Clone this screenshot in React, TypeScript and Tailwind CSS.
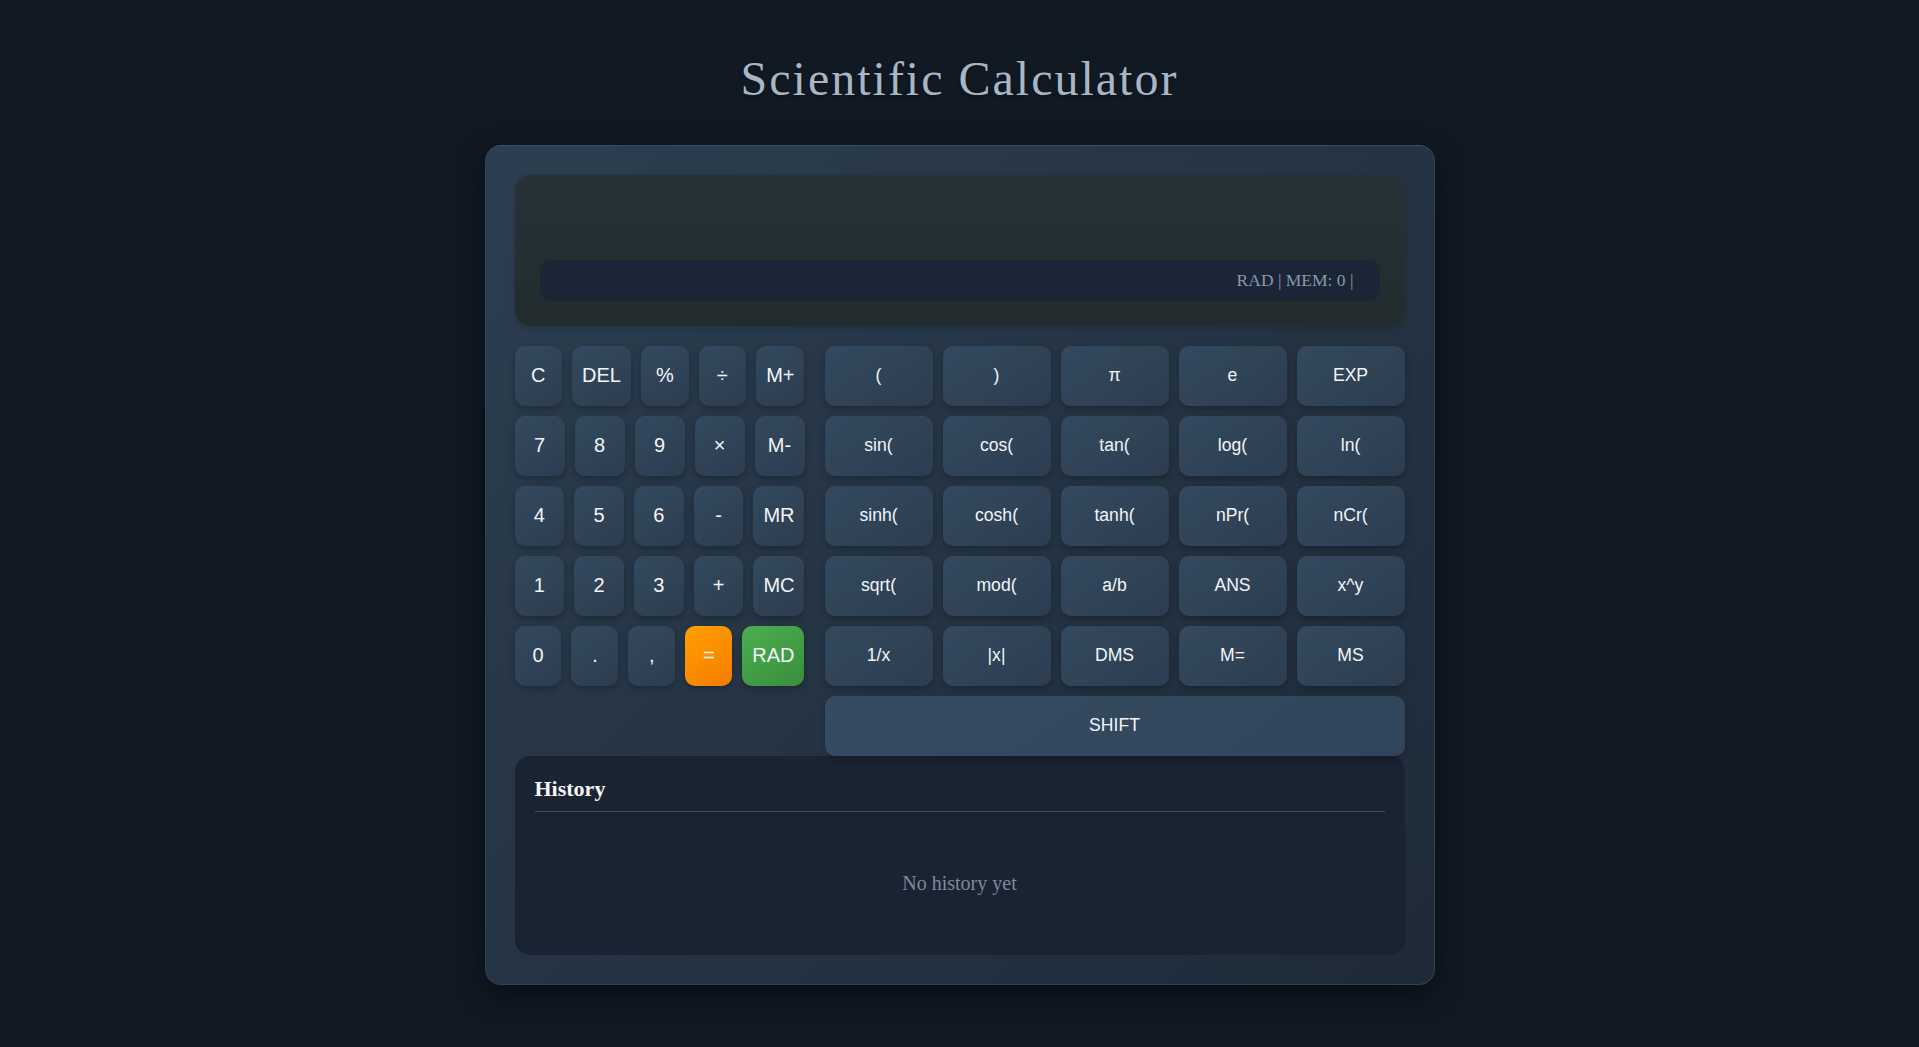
import React from "react";

const leftRows: string[][] = [
  ["C", "DEL", "%", "÷", "M+"],
  ["7", "8", "9", "×", "M-"],
  ["4", "5", "6", "-", "MR"],
  ["1", "2", "3", "+", "MC"],
  ["0", ".", ",", "=", "RAD"],
];

const rightKeys: string[] = [
  "(", ")", "π", "e", "EXP",
  "sin(", "cos(", "tan(", "log(", "ln(",
  "sinh(", "cosh(", "tanh(", "nPr(", "nCr(",
  "sqrt(", "mod(", "a/b", "ANS", "x^y",
  "1/x", "|x|", "DMS", "M=", "MS",
];

function leftClass(k: string): string {
  const base =
    "flex-1 h-[60px] px-[10px] pb-[2px] whitespace-nowrap rounded-[10px] text-[20px] text-[#f1f5f9] flex items-center justify-center shadow-[0_3px_6px_rgba(0,0,0,0.25)] font-['Liberation_Sans',Arial,sans-serif]";
  if (k === "=") return base + " bg-[linear-gradient(145deg,#ffa000,#f57c00)]";
  if (k === "RAD") return base + " bg-[linear-gradient(145deg,#4caf50,#388e3c)]";
  return base + " bg-[linear-gradient(145deg,#34495e,#2c3d50)]";
}

export default function App() {
  return (
    <div className="min-h-screen w-full bg-[#111923] pt-[51px] pb-[40px] font-['Liberation_Serif','Times_New_Roman',serif]">
      <h1 className="text-center text-[48px] leading-[55px] tracking-[2px] text-[#a8b6c4] mb-[39px] [text-shadow:0_2px_4px_rgba(0,0,0,0.3)]">
        Scientific Calculator
      </h1>

      <div className="mx-auto w-[950px] rounded-[16px] border border-[#2f4156] border-t-[#3a4e65] bg-[linear-gradient(135deg,#2c3e50,#1e2a38)] p-[29px] shadow-[0_10px_30px_rgba(0,0,0,0.5)]">
        {/* Display */}
        <div className="rounded-[15px] bg-[linear-gradient(180deg,#263236,#222c2f)] p-[25px] shadow-[0_2px_6px_rgba(0,0,0,0.15)]">
          <div className="h-[60px]" />
          <div className="flex h-[41px] items-center justify-end rounded-[10px] bg-[#1b2535] pr-[26px] text-[17.5px] text-[#8499ae]">
            RAD | MEM: 0 |
          </div>
        </div>

        {/* Keypad */}
        <div className="mt-[20px] grid grid-cols-[1fr_2fr] items-start gap-[20px]">
          <div className="flex flex-col gap-[10px]">
            {leftRows.map((row, i) => (
              <div key={i} className="flex gap-[10px]">
                {row.map((k) => (
                  <button key={k} className={leftClass(k)}>
                    {k}
                  </button>
                ))}
              </div>
            ))}
          </div>
          <div className="grid grid-cols-5 gap-[10px]">
            {rightKeys.map((k) => (
              <button
                key={k}
                className="flex h-[60px] items-center justify-center whitespace-nowrap rounded-[10px] pb-[2px] bg-[linear-gradient(145deg,#34495e,#2c3d50)] text-[17.6px] text-[#f1f5f9] shadow-[0_3px_6px_rgba(0,0,0,0.25)] font-['Liberation_Sans',Arial,sans-serif]"
              >
                {k}
              </button>
            ))}
            <button className="col-span-5 flex h-[60px] items-center justify-center rounded-[10px] pb-[2px] bg-[linear-gradient(145deg,#364b61,#31455a)] text-[17.6px] text-[#f1f5f9] shadow-[0_3px_6px_rgba(0,0,0,0.25)] font-['Liberation_Sans',Arial,sans-serif]">
              SHIFT
            </button>
          </div>
        </div>

        {/* History */}
        <div className="rounded-[15px] bg-[#1a2332] p-[20px]">
          <h3 className="border-b border-[#3a4b60] pb-[10px] text-[22px] font-bold leading-[25px] text-[#f5f7fa]">
            History
          </h3>
          <div className="mt-[20px]">
            <div className="p-[40px] text-center text-[20px] leading-[23px] text-[#7b8b9c]">
              No history yet
            </div>
          </div>
        </div>
      </div>
    </div>
  );
}
